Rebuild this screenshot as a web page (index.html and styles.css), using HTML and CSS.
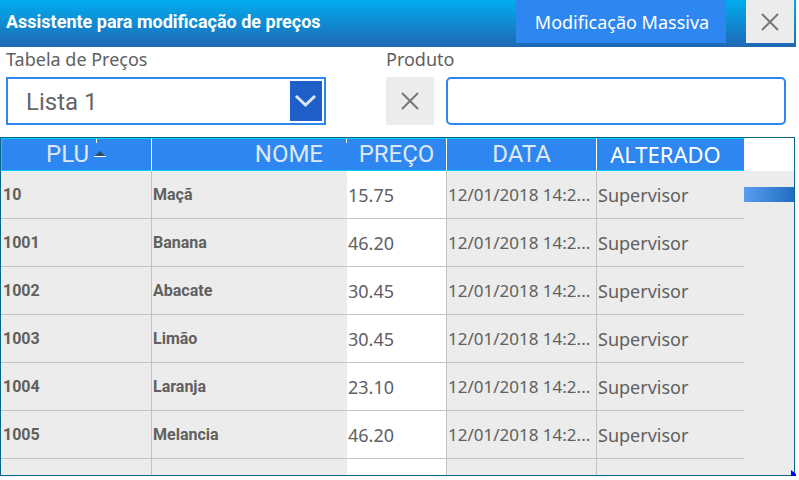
FILE: index.html
```html
<!DOCTYPE html>
<html lang="pt">
<head>
<meta charset="utf-8">
<meta name="viewport" content="width=device-width, initial-scale=1">
<title>Assistente para modificação de preços</title>
<link rel="stylesheet" href="styles.css">
</head>
<body>
<header class="titlebar">
  <h1>Assistente para modificação de preços</h1>
  <button class="mass" type="button">Modificação Massiva</button>
  <button class="square" type="button" aria-label="Fechar">
    <svg width="18" height="18" viewBox="0 0 18 18"><path d="M1 1 17 17M17 1 1 17"/></svg>
  </button>
</header>
<form class="filters">
  <div class="field">
    <label for="lista">Tabela de Preços</label>
    <div class="select">
      <select id="lista"><option>Lista 1</option></select>
      <svg class="arrow" width="32" height="40" viewBox="0 0 32 40"><path d="M6 15 15.500 24 25 15"/></svg>
    </div>
  </div>
  <div class="field product">
    <label for="produto">Produto</label>
    <div class="entry">
      <button class="square" type="button" aria-label="Limpar">
        <svg width="18" height="18" viewBox="0 0 18 18"><path d="M1 1 17 17M17 1 1 17"/></svg>
      </button>
      <input id="produto" type="text">
    </div>
  </div>
</form>
<main class="grid">
  <table>
    <colgroup><col class="c-plu"><col class="c-nome"><col class="c-preco"><col class="c-data"><col></colgroup>
    <thead>
      <tr>
        <th class="plu">PLU<svg class="sort" width="12" height="6" viewBox="0 0 12 6"><path d="M1 5 6 0 11 5z" fill="#30495f"/><path d="M0 5.500H12" stroke="#fff"/></svg></th>
        <th class="nome">NOME</th><th class="preco">PREÇO</th><th class="data">DATA</th><th class="alterado">ALTERADO</th>
      </tr>
    </thead>
    <tbody>
      <tr><td>10</td><td>Maçã</td><td>15.75</td><td>12/01/2018 14:2...</td><td>Supervisor</td></tr>
      <tr><td>1001</td><td>Banana</td><td>46.20</td><td>12/01/2018 14:2...</td><td>Supervisor</td></tr>
      <tr><td>1002</td><td>Abacate</td><td>30.45</td><td>12/01/2018 14:2...</td><td>Supervisor</td></tr>
      <tr><td>1003</td><td>Limão</td><td>30.45</td><td>12/01/2018 14:2...</td><td>Supervisor</td></tr>
      <tr><td>1004</td><td>Laranja</td><td>23.10</td><td>12/01/2018 14:2...</td><td>Supervisor</td></tr>
      <tr><td>1005</td><td>Melancia</td><td>46.20</td><td>12/01/2018 14:2...</td><td>Supervisor</td></tr>
      <tr class="rest"><td></td><td></td><td></td><td></td><td></td></tr>
    </tbody>
  </table>
  <div class="scroll"><div class="track"><div class="thumb"></div></div></div>
  <svg class="grip" width="5" height="9" viewBox="0 0 5 9"><path d="M0 0 5 4V9H0z" fill="#00f"/></svg>
</main>
</body>
</html>
```
FILE: styles.css
```css
* { box-sizing: border-box; }
body {
  margin: 0;
  padding-right: 3px;
  background: #fff;
  color: #606060;
  font: 18px/24px "Noto Sans", sans-serif;
}
button, input, select { font: inherit; margin: 0; border: 0; border-radius: 0; }
svg { display: block; fill: none; }

.titlebar {
  display: flex;
  align-items: flex-start;
  height: 47px;
  padding: 0 2px 0 6px;
  background: linear-gradient(#00adef, #1f68b3);
}
h1 {
  flex: 1;
  margin: 0;
  color: #fff;
  font: bold 18px/44px Roboto, sans-serif;
  white-space: nowrap;
}
.mass {
  width: 210px;
  height: 43px;
  margin-right: 20px;
  padding: 0 0 0 2px;
  background: #2e87f0;
  color: #fff;
}
.square {
  display: flex;
  flex: none;
  align-items: center;
  justify-content: center;
  width: 48px;
  height: 48px;
  padding: 0;
  background: #ebeceb;
  stroke: #777;
  stroke-width: 2;
}
.titlebar .square { height: 43px; }

.filters {
  display: flex;
  gap: 60px;
  padding: 0 10px 12px 6px;
}
.field { width: 320px; }
.product { flex: 1; }
label { display: block; height: 30px; }
.select { display: grid; }
.select > * { grid-area: 1 / 1; }
select {
  appearance: none;
  width: 100%;
  height: 48px;
  padding: 2px 18px 0;
  border: 2px solid #2e87f0;
  background: #fff;
  color: #666;
  font: 24px Roboto, sans-serif;
}
.arrow {
  place-self: center end;
  margin-right: 4px;
  background: #1f60c8;
  stroke: #dbe8fb;
  stroke-width: 3;
  pointer-events: none;
}
.entry { display: flex; gap: 12px; }
input {
  flex: 1;
  min-width: 0;
  height: 48px;
  padding: 0 12px;
  border: 2px solid #2e87f0;
  border-radius: 5px;
}

.grid {
  position: relative;
  display: flex;
  margin-right: 1px;
  border: 1px solid #086488;
}
table {
  flex: 1;
  width: 100%;
  min-width: 0;
  table-layout: fixed;
  border-collapse: separate;
  border-spacing: 0;
}
.c-plu { width: 151px; }
.c-nome { width: 195px; }
.c-preco { width: 100px; }
.c-data { width: 150px; }
th {
  height: 33px;
  padding: 0;
  border-top: 1px solid #00d0ff;
  border-bottom: 1px solid #00d0ff;
  border-right: 1px solid #fff;
  background: #2e87f0;
  color: #dfe8f4;
  font: 24px/31px Roboto, sans-serif;
}
.plu {
  border-left: 1px solid #00d0ff;
  padding-right: 1px;
  background: linear-gradient(#fff, #fff) 94px 0 / 1px 4px no-repeat #2e87f0;
}
.plu .sort { display: inline-block; margin: 0 0 5px 5px; }
th.nome {
  border-right: 0;
  padding-right: 24px;
  background: linear-gradient(#fff, #fff) 100% 0 / 1px 4px no-repeat #2e87f0;
  text-align: right;
}
th.alterado {
  border-right: 0;
  padding-right: 10px;
  color: #fff;
  font: 22px/31px "Noto Sans", sans-serif;
}
td {
  height: 48px;
  padding: 0 0 0 1px;
  border-right: 1px solid #c2c4c3;
  border-bottom: 1px solid #c2c4c3;
  background: #ebeceb;
  overflow: hidden;
  white-space: nowrap;
}
td:nth-child(-n+2) { font: bold 16px/24px Roboto, sans-serif; }
td:nth-child(4) { font-size: 17px; }
td:first-child { padding-left: 2px; }
td:nth-child(2), td:last-child { border-right: 0; }
td:nth-child(3) { background: #fff; }
.rest td { height: 16px; border-bottom: 0; }

.scroll {
  display: flex;
  flex: none;
  flex-direction: column;
  width: 50px;
}
.track {
  flex: 1;
  margin-top: 33px;
  padding-top: 16px;
  background: #ebeceb;
}
.thumb {
  height: 15px;
  background: linear-gradient(100deg, #5a9ff2, #1f6cc0);
}
.grip {
  position: absolute;
  right: -2px;
  bottom: -4px;
}
```
